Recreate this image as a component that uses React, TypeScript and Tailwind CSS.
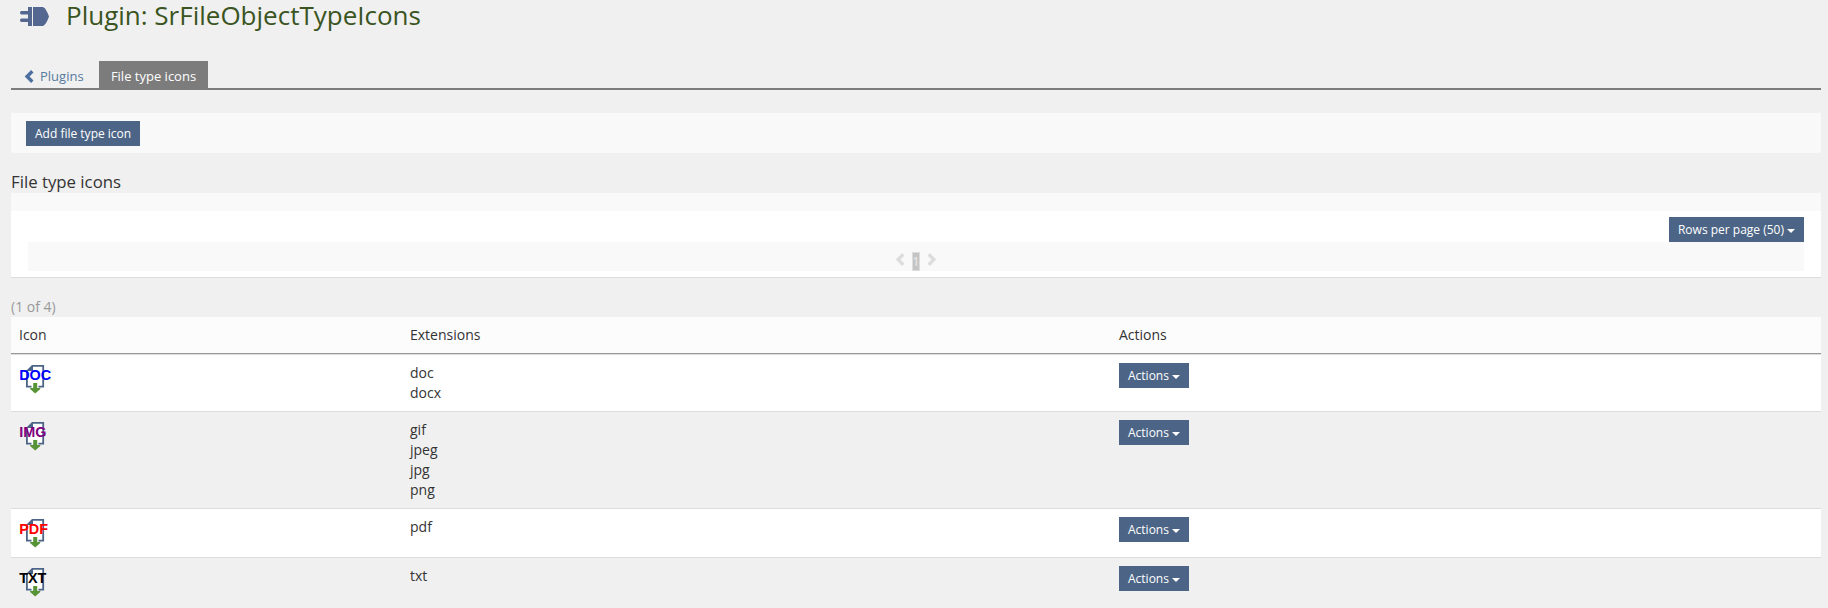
import React from "react";

const Caret = () => (
  <svg width="8" height="4" viewBox="0 0 8 4" className="mt-[3px] ml-[3px]" fill="currentColor">
    <path d="M0 0H8L4 4Z" />
  </svg>
);

const Button = ({ children, caret }: { children: React.ReactNode; caret?: boolean }) => (
  <button className="flex h-[25px] items-center bg-[#4c6586] px-[9px] text-[12px] leading-[17px] whitespace-nowrap text-white">
    {children}
    {caret && <Caret />}
  </button>
);

const Chevron = ({ right, className }: { right?: boolean; className?: string }) => (
  <svg width="10" height="13" viewBox="0 0 10 13" className={className} fill="none" stroke="currentColor" strokeWidth="3.4">
    <path d={right ? "M1.7 1.3L6.9 6.5L1.7 11.7" : "M8.3 1.3L3.1 6.5L8.3 11.7"} />
  </svg>
);

const PlugIcon = () => (
  <svg width="30" height="20" viewBox="0 0 30 20" fill="#536791">
    <path d="M9 0H13V19H9V15H2.5Q1 15 1 13.3T2.5 11.500H9V7.500H2.500Q1 7.500 1 5.700T2.500 4H9Z" />
    <path d="M14 0H24Q27.500 2 30 9.500Q27.500 17 24 19H14Z" />
  </svg>
);

const FileIcon = ({ label, color }: { label: string; color: string }) => (
  <svg width="32" height="32" viewBox="0 0 32 32" className="block overflow-visible">
    <path d="M14 2H24V24H8V8Z" fill="#fff" />
    <path d="M7 8L13 2H14V8Z" fill="#4c6586" />
    <path d="M13 2.900H24.200V23.600H19.500M12.500 23.600H7.900V7" fill="none" stroke="#4c6586" strokeWidth="1.800" />
    <path d="M14.200 20H18.200V25H21.300V26L16.200 30.500L11.100 26V25H14.200Z" fill="#579438" />
    <text x="0.200" y="17" className={`font-['Liberation_Sans',sans-serif] text-[14.4px] font-bold ${color}`}>
      {label}
    </text>
  </svg>
);

const rows = [
  { label: "DOC", color: "fill-[#0000ff]", ext: ["doc", "docx"], cls: "h-[57px] bg-white" },
  { label: "IMG", color: "fill-[#800080]", ext: ["gif", "jpeg", "jpg", "png"], cls: "h-[97px]" },
  { label: "PDF", color: "fill-[#ff0000]", ext: ["pdf"], cls: "h-[49px] bg-white" },
  { label: "TXT", color: "fill-[#000000]", ext: ["txt"], cls: "h-[58px]" },
];

export default function App() {
  return (
    <div className="h-[608px] overflow-hidden bg-[#f0f0f0] pr-[7px] pl-[11px] font-['Open_Sans',sans-serif] text-[14px] leading-5 text-[#333]">
      <header className="flex h-[61px] items-start">
        <div className="mt-[7px] ml-2">
          <PlugIcon />
        </div>
        <h1 className="ml-[17px] text-[26px] leading-[30px] text-[#3a5422]">Plugin: SrFileObjectTypeIcons</h1>
      </header>
      <nav className="flex h-[29px] border-b-2 border-[#7c7c7c] text-[13px]">
        <a className="flex w-[88px] items-center pl-[13px] text-[#557b9f]">
          <Chevron className="mt-[3px] text-[#4c6f9f]" />
          <span className="ml-[6px] pt-[3px]">Plugins</span>
        </a>
        <a className="flex w-[109px] items-center justify-center bg-[#7c7c7c] pt-[3px] text-white">File type icons</a>
      </nav>
      <div className="mt-[23px] flex h-10 items-center bg-[#f9f9f9] pl-[15px]">
        <Button>Add file type icon</Button>
      </div>
      <h2 className="flex h-10 items-end text-[16.8px] leading-[22px]">File type icons</h2>
      <section className="h-[85px] border-b border-[#ddd] bg-white">
        <div className="h-[18px] bg-[#f9f9f9]" />
        <div className="flex justify-end pt-[6px] pr-[17px]">
          <Button caret>Rows per page (50)</Button>
        </div>
        <div className="mr-[17px] ml-[17px] flex h-[29px] items-start justify-center bg-[#f9f9f9] pt-[10px] text-[#ddd]">
          <Chevron className="mt-[1px]" />
          <span className="mx-[7px] flex h-[19px] w-2 items-center justify-center border border-[#ddd] bg-[#c4c4c4] text-[12px] text-[#eee]">1</span>
          <Chevron right className="mt-[1px]" />
        </div>
      </section>
      <div className="flex h-[39px] items-end text-[#999]">(1 of 4)</div>
      <div className="flex h-[38px] items-center border-b border-[#ddd] bg-[#fcfcfc] pb-[2px] shadow-[inset_0_-1px_0_#999]">
        <div className="w-[391px] pl-2">Icon</div>
        <div className="w-[709px] pl-2">Extensions</div>
        <div className="pl-2">Actions</div>
      </div>
      {rows.map((r) => (
        <div key={r.label} className={`flex border-b border-[#ddd] pt-2 ${r.cls}`}>
          <div className="w-[391px] pl-2">
            <FileIcon label={r.label} color={r.color} />
          </div>
          <div className="w-[709px] pl-2">
            {r.ext.map((e) => (
              <div key={e}>{e}</div>
            ))}
          </div>
          <div className="pl-2">
            <Button caret>Actions</Button>
          </div>
        </div>
      ))}
    </div>
  );
}
